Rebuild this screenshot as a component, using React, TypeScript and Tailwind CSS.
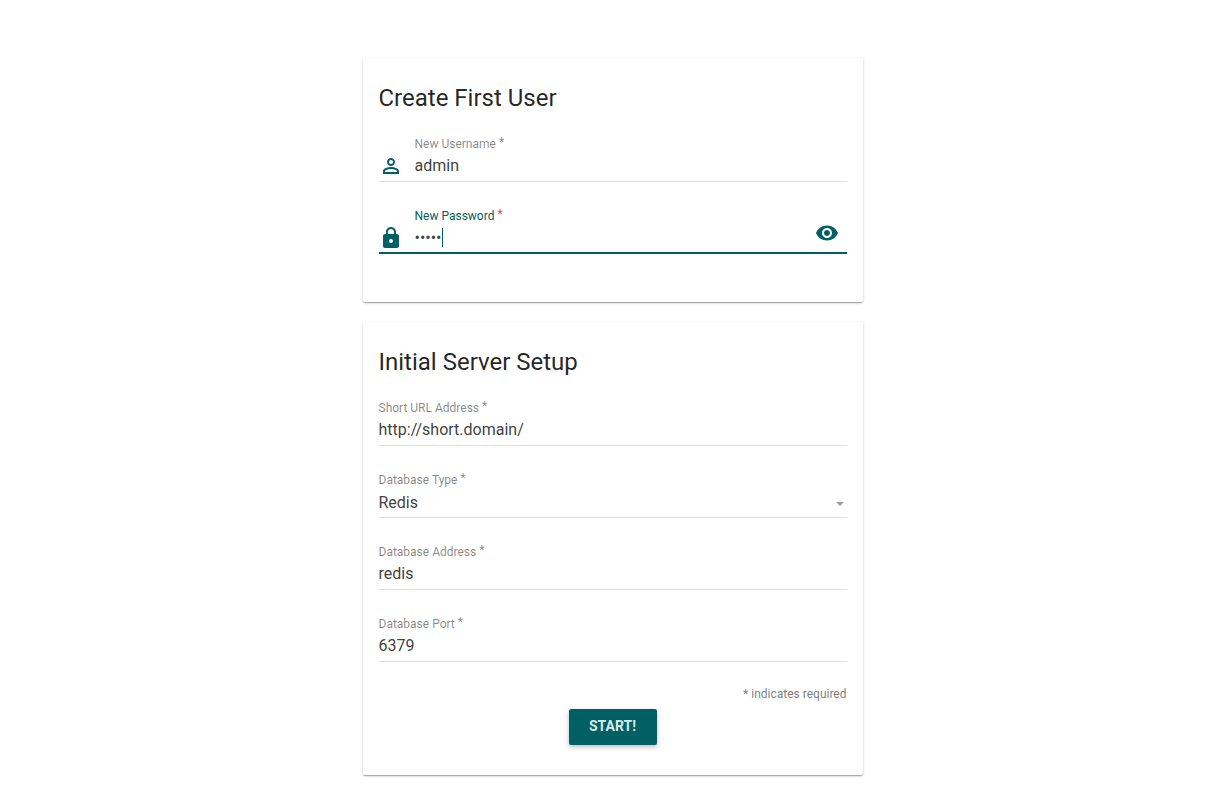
import { useState } from 'react';
import type { ReactNode } from 'react';
import { MdLock, MdPersonOutline, MdVisibility } from 'react-icons/md';

const boxClass =
  'block h-[30px] w-full rounded-none border-b border-black/12 bg-transparent text-base text-[#212121]/87 outline-none';
const iconInputClass = 'h-[26px] min-w-0 flex-1 bg-transparent text-base text-[#212121]/87 outline-none';

function Card({ title, className, children }: { title: string; className: string; children: ReactNode }) {
  return (
    <section
      className={`rounded-xs bg-white px-4 pt-6 shadow-[0_1px_3px_0_rgba(0,0,0,0.2),0_1px_1px_0_rgba(0,0,0,0.14),0_2px_1px_-1px_rgba(0,0,0,0.12)] ${className}`}
    >
      <h2 className="mb-[22px] text-2xl leading-8 text-black/87">{title}</h2>
      {children}
    </section>
  );
}

function Label({ id, text, active = false }: { id: string; text: string; active?: boolean }) {
  return (
    <label
      htmlFor={id}
      className={`flex h-4 items-center text-xs ${active ? 'text-[#006064]' : 'text-black/48'}`}
    >
      {text}
      <span className={`ml-[3px] pb-1 ${active ? 'text-[#f44336]' : ''}`}>*</span>
    </label>
  );
}

function TextField({ id, text, initial }: { id: string; text: string; initial: string }) {
  const [value, setValue] = useState(initial);
  return (
    <div>
      <Label id={id} text={text} />
      <input
        id={id}
        type="text"
        required
        className={`${boxClass} pb-0.5`}
        value={value}
        onChange={(e) => setValue(e.target.value)}
      />
    </div>
  );
}

export default function App() {
  const [username, setUsername] = useState('admin');
  const [password, setPassword] = useState('admin');
  const [visible, setVisible] = useState(false);

  return (
    <main className="min-h-screen bg-white pt-[58px] pb-9 pl-0.5 font-[Roboto,sans-serif]">
      <form className="mx-auto flex max-w-[500px] flex-col gap-5" onSubmit={(e) => e.preventDefault()}>
        <Card title="Create First User" className="pb-12">
          <div className="flex flex-col gap-[26px]">
            <div className="border-b border-black/12 pl-9">
              <Label id="username" text="New Username" />
              <div className="-ml-9 flex h-[29px] items-start">
                <MdPersonOutline className="mt-0.5 mr-3 size-6 shrink-0 text-[#006064]" />
                <input
                  id="username"
                  type="text"
                  required
                  className={iconInputClass}
                  value={username}
                  onChange={(e) => setUsername(e.target.value)}
                />
              </div>
            </div>
            <div className="border-b-2 border-[#006064] pl-9">
              <Label id="password" text="New Password" active />
              <div className="relative -ml-9 flex h-7 items-start">
                <MdLock className="mt-0.5 mr-3 size-6 shrink-0 text-[#006064]" />
                <input
                  id="password"
                  type={visible ? 'text' : 'password'}
                  required
                  className={iconInputClass}
                  value={password}
                  onChange={(e) => setPassword(e.target.value)}
                />
                <span aria-hidden="true" className="absolute top-1 left-[63px] h-[19px] w-px bg-[#006064]" />
                <button
                  type="button"
                  aria-label="Show password"
                  className="-mt-[3px] mr-2 text-[#006064]"
                  onClick={() => setVisible(!visible)}
                >
                  <MdVisibility className="size-6" />
                </button>
              </div>
            </div>
          </div>
        </Card>

        <Card title="Initial Server Setup" className="pb-[30px]">
          <div className="flex flex-col gap-[26px]">
            <TextField id="short-url" text="Short URL Address" initial="http://short.domain/" />
            <div>
              <Label id="db-type" text="Database Type" />
              <div className="relative">
                <select id="db-type" required defaultValue="Redis" className={`${boxClass} appearance-none`}>
                  <option>Redis</option>
                </select>
                <svg
                  viewBox="0 0 8 4"
                  aria-hidden="true"
                  className="pointer-events-none absolute top-3.5 right-[3px] h-1 w-2 text-black/38"
                >
                  <path d="M0 0h8L4 4z" fill="currentColor" />
                </svg>
              </div>
            </div>
            <TextField id="db-address" text="Database Address" initial="redis" />
            <TextField id="db-port" text="Database Port" initial="6379" />
          </div>
          <p className="mt-6 text-right text-xs leading-4 text-black/54">* indicates required</p>
          <div className="mt-[7px] flex justify-center">
            <button
              type="submit"
              className="h-9 w-[88px] rounded-xs bg-[#006064] pb-0.5 text-sm font-bold text-white/87 uppercase shadow-[0_2px_5px_0_rgba(0,0,0,0.26)]"
            >
              Start!
            </button>
          </div>
        </Card>
      </form>
    </main>
  );
}
